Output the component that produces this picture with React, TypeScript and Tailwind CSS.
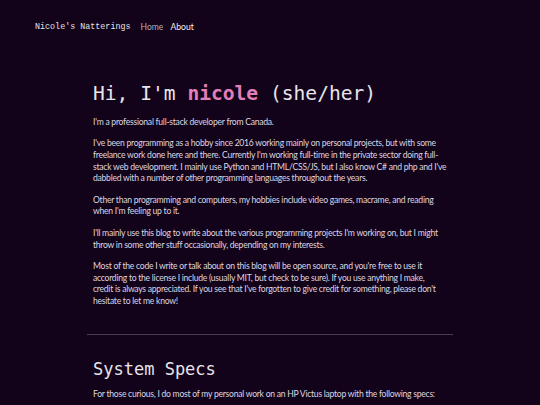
export default function App() {
  const body = "font-['Lato',sans-serif] text-[8.6px] leading-[11.6px] tracking-[-0.26px] text-[#ddd6e0]";
  return (
    <div className="min-h-screen bg-[#12031a] text-[#ddd6e0]">
      <header className="flex items-center gap-[10px] pl-[35px] pt-[21px] pb-[6px]">
        <span className="font-['Liberation_Mono',monospace] text-[8.4px] text-[#e6e1e8]">Nicole's Natterings</span>
        <nav className="flex gap-[7px] font-['Lato',sans-serif] text-[8.6px]">
          <a className="text-[#b3aab8]">Home</a>
          <a className="text-[#f2eef4]">About</a>
        </nav>
      </header>

      <main className="mx-auto w-[366px] pt-[42px]">
        <section className="px-[6px]">
          <h1 className="font-['DejaVu_Sans_Mono',monospace] text-[19.6px] leading-[24px] text-[#e8e4ea]">
            Hi, I'm <span className="font-bold text-[#e27fb8]">nicole</span> (she/her)
          </h1>
          <div className={`mt-[11px] flex flex-col gap-[10px] ${body}`}>
            <p>I'm a professional full-stack developer from Canada.</p>
            <p>
              I've been programming as a hobby since 2016 working mainly on personal projects, but with some{' '}
              freelance work done here and there. Currently I'm working full-time in the private sector doing full-stack
              web development. I mainly use Python and HTML/CSS/JS, but I also know C# and php and I've dabbled with a
              number of other programming languages throughout the years.
            </p>
            <p>
              Other than programming and computers, my hobbies include video games, macrame, and reading when I'm
              feeling up to it.
            </p>
            <p>
              I'll mainly use this blog to write about the various programming projects I'm working on, but I might
              throw in some other stuff occasionally, depending on my interests.
            </p>
            <p>
              Most of the code I write or talk about on this blog will be open source, and you're free to use it
              according to the license I include (usually MIT, but check to be sure). If you use anything I make,
              <br />
              credit is always appreciated. If you see that I've forgotten to give credit for something, please don't
              <br />
              hesitate to let me know!
            </p>
          </div>
        </section>

        <hr className="mt-[26px] border-t border-[#4a3d52]" />

        <section className="px-[6px] pt-[23px]">
          <h2 className="font-['DejaVu_Sans_Mono',monospace] text-[17px] leading-[22px] text-[#e8e4ea]">System Specs</h2>
          <p className={`mt-[9px] ${body}`}>
            For those curious, I do most of my personal work on an HP Victus laptop with the following specs:
          </p>
        </section>
      </main>
    </div>
  );
}
